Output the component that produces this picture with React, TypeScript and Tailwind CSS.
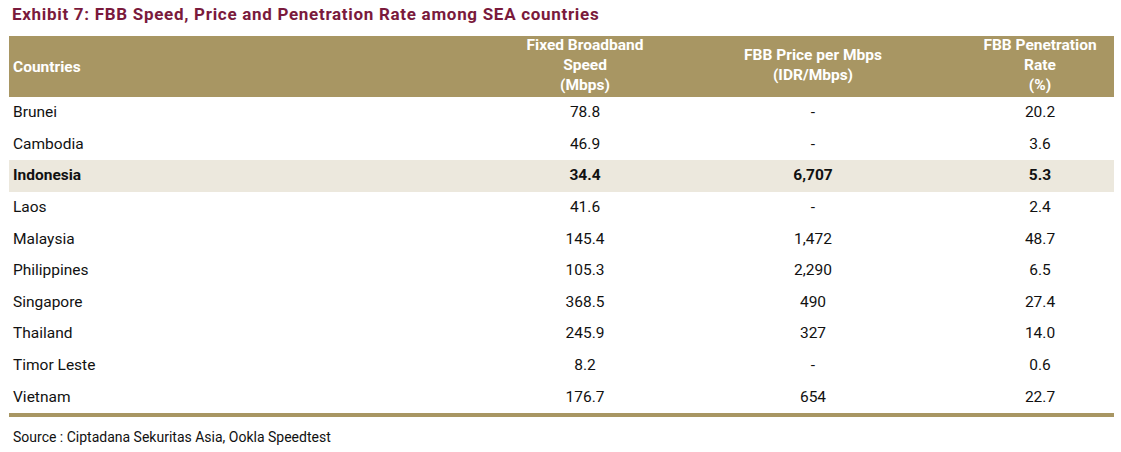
const rows = [
  { country: "Brunei", speed: "78.8", price: "-", rate: "20.2" },
  { country: "Cambodia", speed: "46.9", price: "-", rate: "3.6" },
  { country: "Indonesia", speed: "34.4", price: "6,707", rate: "5.3", highlight: true },
  { country: "Laos", speed: "41.6", price: "-", rate: "2.4" },
  { country: "Malaysia", speed: "145.4", price: "1,472", rate: "48.7" },
  { country: "Philippines", speed: "105.3", price: "2,290", rate: "6.5" },
  { country: "Singapore", speed: "368.5", price: "490", rate: "27.4" },
  { country: "Thailand", speed: "245.9", price: "327", rate: "14.0" },
  { country: "Timor Leste", speed: "8.2", price: "-", rate: "0.6" },
  { country: "Vietnam", speed: "176.7", price: "654", rate: "22.7" },
];

const cols = "grid grid-cols-[461px_230px_226px_188px]";

export default function App() {
  return (
    <div className="w-[1121px] h-[452px] bg-white font-['Roboto',sans-serif] text-[#111]">
      <div className="pl-[12px] pt-[4px] h-[36px] text-[17px] font-bold tracking-[0.7px] text-[#7a1a3c] leading-[20px]">
        Exhibit 7: FBB Speed, Price and Penetration Rate among SEA countries
      </div>

      <div className="ml-[9px] w-[1105px]">
        {/* header */}
        <div className={`${cols} h-[61px] bg-[#a89663] text-white font-bold text-[15.5px] leading-[20px] items-center`}>
          <div className="pl-[4px]">Countries</div>
          <div className="text-center -mt-[3px]">
            Fixed Broadband
            <br />
            Speed
            <br />
            (Mbps)
          </div>
          <div className="text-center -mt-[3px]">
            FBB Price per Mbps
            <br />
            (IDR/Mbps)
          </div>
          <div className="text-center pl-[40px] -mt-[3px]">
            FBB Penetration
            <br />
            Rate
            <br />
            (%)
          </div>
        </div>

        {/* body */}
        {rows.map((r) => (
          <div
            key={r.country}
            className={`${cols} h-[31.6px] items-center text-[15.5px] ${
              r.highlight ? "bg-[#ece8dd] font-bold" : ""
            }`}
          >
            <div className="pl-[4px]">{r.country}</div>
            <div className="text-center">{r.speed}</div>
            <div className="text-center">{r.price}</div>
            <div className="text-center pl-[40px]">{r.rate}</div>
          </div>
        ))}

        <div className="h-[4px] bg-[#a89663]" />
      </div>

      <div className="pl-[13px] pt-[10px] text-[14px] text-[#111]">
        Source : Ciptadana Sekuritas Asia, Ookla Speedtest
      </div>
    </div>
  );
}
